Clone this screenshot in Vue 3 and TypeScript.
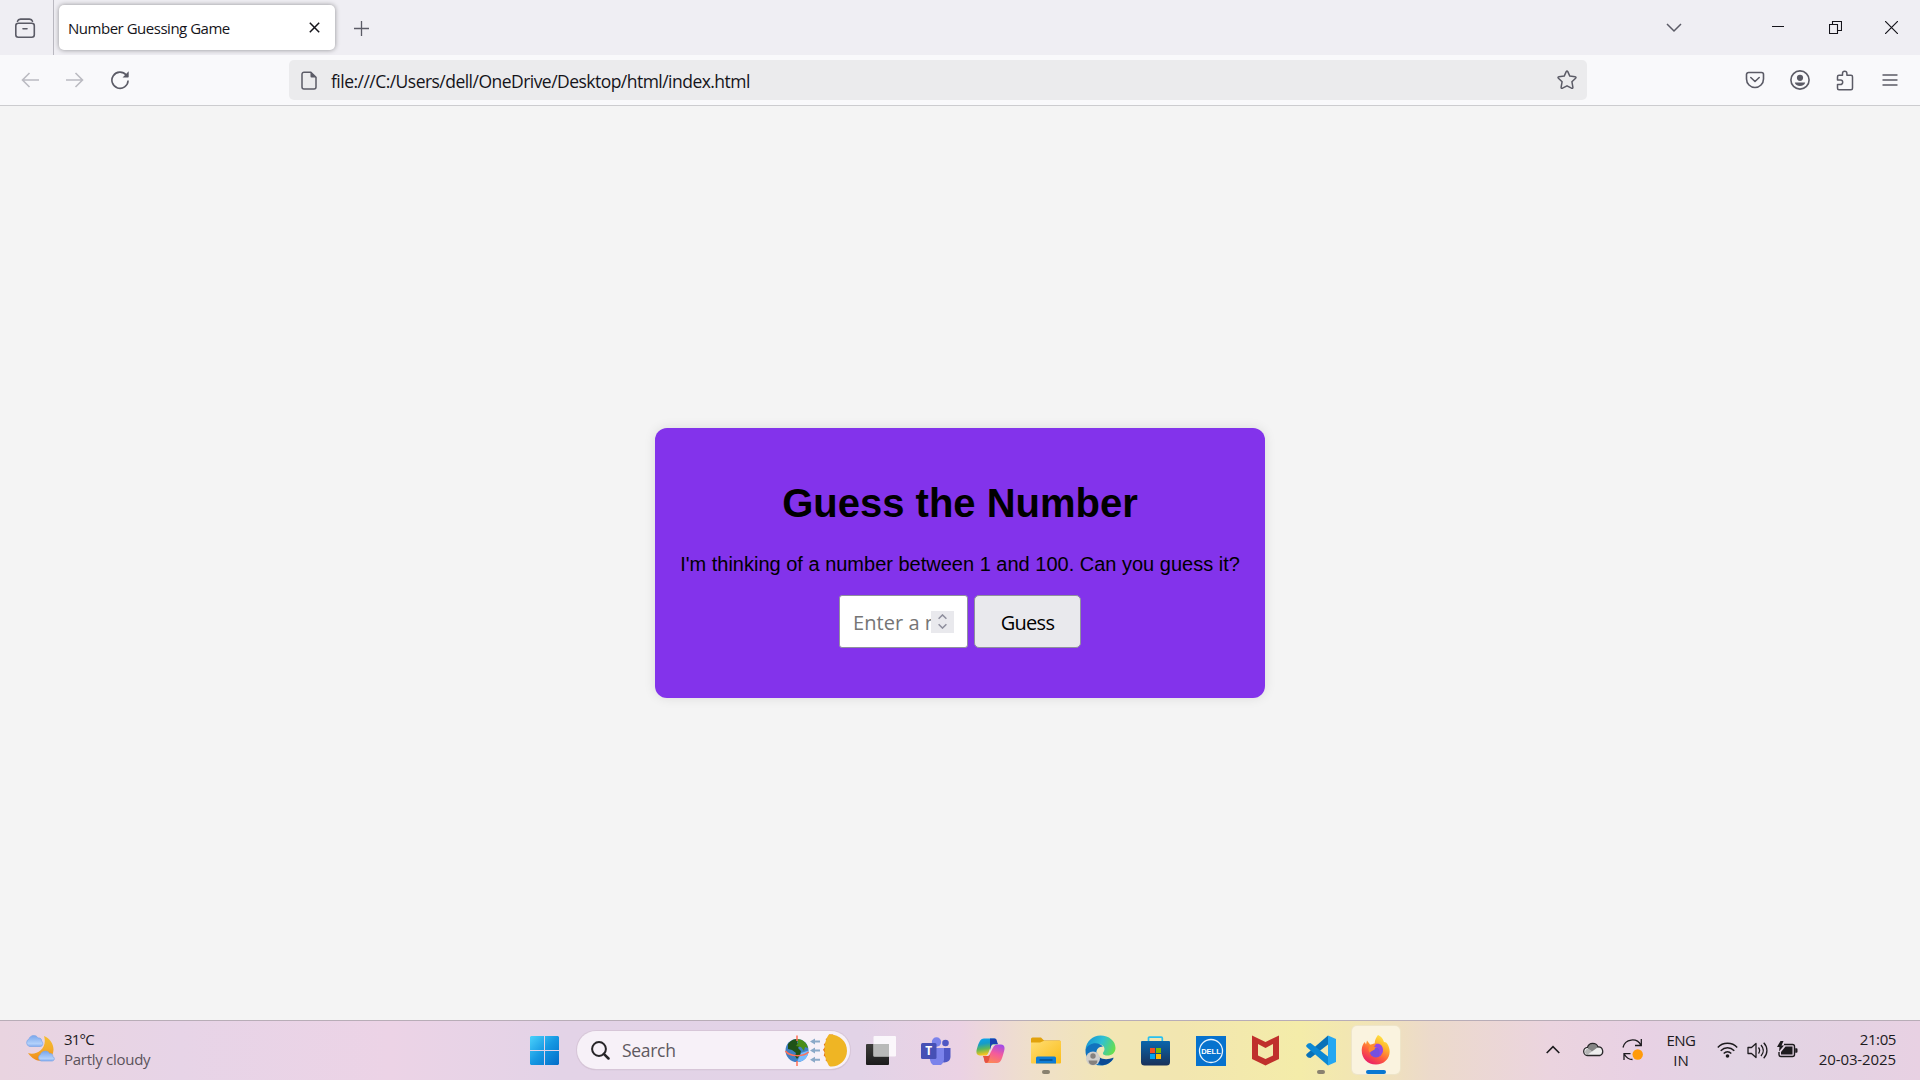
<script setup lang="ts">
import { ref } from 'vue'

const guess = ref('')
const url = 'file:///C:/Users/dell/OneDrive/Desktop/html/index.html'
</script>

<template>
  <div class="screen">
    <header class="tabbar">
      <div class="recent">
        <svg width="22" height="22" viewBox="0 0 22 22" fill="none" stroke="#5b5b66" stroke-width="1.6" stroke-linecap="round">
          <path d="M3.5 3.2C4 1.6 5 1.1 6.5 1.1h9c1.500 0 2.500.5 3 2.100" />
          <rect x="1.800" y="5.300" width="18.500" height="14" rx="2.500" />
          <path d="M9 10.800h4" />
        </svg>
      </div>
      <div class="tab">
        <span class="tab-title">Number Guessing Game</span>
        <svg width="11" height="11" viewBox="0 0 11 11" stroke="#15141a" stroke-width="1.500"><path d="M.8.8l9.400 9.400M10.200.8L.8 10.200" /></svg>
      </div>
      <svg class="plus" width="15" height="15" viewBox="0 0 15 15" stroke="#5b5b66" stroke-width="1.300"><path d="M7.500 0v15M0 7.500h15" /></svg>
      <div class="window-controls">
        <svg class="w-chev" width="16" height="10" viewBox="0 0 16 10" fill="none" stroke="#5b5b66" stroke-width="1.500"><path d="M1 1l7 7 7-7" /></svg>
        <svg class="w-min" width="12" height="14" viewBox="0 0 12 14" stroke="#15141a"><path d="M0 6.500h12" /></svg>
        <svg class="w-max" width="13" height="14" viewBox="0 0 13 14" fill="none" stroke="#15141a" stroke-width="1.100"><path d="M.5 4.500h8v9h-8zM3.500 4.500v-3h9v9h-4" /></svg>
        <svg class="w-close" width="13" height="13" viewBox="0 0 13 13" stroke="#15141a" stroke-width="1.200"><path d="M0 0l13 13M13 0L0 13" /></svg>
      </div>
    </header>

    <nav class="toolbar">
      <div class="nav-icons">
        <svg width="18" height="16" viewBox="0 0 18 16" fill="none" stroke="#bbbbc2" stroke-width="1.600"><path d="M18 8H1.500M8.500 1l-7 7 7 7" /></svg>
        <svg width="18" height="16" viewBox="0 0 18 16" fill="none" stroke="#bbbbc2" stroke-width="1.600"><path d="M0 8h16.500M9.500 1l7 7-7 7" /></svg>
        <svg width="18" height="20" viewBox="0 0 18 20" fill="none" stroke="#5b5b66" stroke-width="1.600"><path d="M15.200 5A8.100 8.100 0 1 0 17.100 10.500" /><path d="M17.700 1.200v5.500a.7.700 0 0 1-.7.700h-5.400z" fill="#5b5b66" stroke="none" /></svg>
      </div>
      <div class="urlbar">
        <svg width="16" height="19" viewBox="0 0 16 19" fill="none" stroke="#5b5b66" stroke-width="1.500"><path d="M3 1.200h6.800L15 6.300V16a2 2 0 0 1-2 2H3a2 2 0 0 1-2-2V3.200a2 2 0 0 1 2-2z" /><path d="M9.500 1v4.500a1 1 0 0 0 1 1H15z" fill="#5b5b66" stroke="none" /></svg>
        <span class="url">{{ url }}</span>
        <svg width="20" height="20" viewBox="0 0 20 20" fill="none" stroke="#5b5b66" stroke-width="1.500" stroke-linejoin="round"><path d="M9.200 1.600q.8-1.200 1.600 0l2 4.500 5.300.6q1.500.3.5 1.500l-3.700 3.500 1 5.600q0 1.500-1.400.9L10 15.800l-4.500 2.400q-1.400.6-1.400-.9l1-5.600L1.400 8.200q-1-1.200.5-1.500l5.300-.6z" /></svg>
      </div>
      <div class="tools">
        <svg width="20" height="18" viewBox="0 0 20 18" fill="none" stroke="#5b5b66" stroke-width="1.600" stroke-linecap="round" stroke-linejoin="round"><path d="M3.500 1.500h13a2 2 0 0 1 2 2V8A8.400 8.400 0 0 1 1.500 8V3.500a2 2 0 0 1 2-2z" /><path d="M5.800 6.500L10 10.500l4.200-4" /></svg>
        <svg class="account" width="20" height="20" viewBox="0 0 20 20" fill="#5b5b66"><circle cx="10" cy="10" r="9.100" fill="none" stroke="#5b5b66" stroke-width="1.600" /><circle cx="10" cy="7.800" r="3.100" /><path d="M4.800 12.500h10.400c-.4 2.100-2.500 3.600-5.200 3.600s-4.800-1.500-5.200-3.600z" /></svg>
        <svg class="puzzle" width="18" height="21" viewBox="0 0 18 21" fill="none" stroke="#5b5b66" stroke-width="1.500" stroke-linejoin="round"><path d="M1.500 8V6.700q0-1.500 1.500-1.500h3.500V3.500a2.200 2.200 0 0 1 4.400 0v1.700H15q1.500 0 1.500 1.500v11.600q0 1.500-1.500 1.500H3q-1.500 0-1.500-1.500v-3.800h3a2.200 2.200 0 0 0 0-4.400h-3z" /></svg>
        <svg width="16" height="12" viewBox="0 0 16 12" stroke="#5b5b66" stroke-width="1.400" stroke-linecap="round"><path d="M1 1h14M1 6h14M1 11h14" /></svg>
      </div>
    </nav>

    <main class="page">
      <section class="card">
        <h1>Guess the Number</h1>
        <p>I'm thinking of a number between 1 and 100. Can you guess it?</p>
        <div class="controls">
          <label class="field">
            <input v-model="guess" type="text" placeholder="Enter a number" />
            <span class="spinner">
              <svg width="9" height="15" viewBox="0 0 9 15" fill="none" stroke="#8f8f9d" stroke-width="1.500"><path d="M.6 4.700l3.900-3.800 3.900 3.800M.6 10.300l3.900 3.800 3.900-3.800" /></svg>
            </span>
          </label>
          <button type="button"><span>Guess</span></button>
        </div>
      </section>
    </main>

    <footer class="taskbar">
      <div class="weather">
        <svg width="31" height="29" viewBox="0 0 31 29">
          <defs>
            <linearGradient id="moon" x1="0" y1="0" x2="0" y2="1"><stop offset="0" stop-color="#f5bd2e" /><stop offset=".5" stop-color="#f3ad2c" /><stop offset="1" stop-color="#f18a18" /></linearGradient>
            <linearGradient id="cloud" x1="0" y1="0" x2="0" y2="1"><stop offset="0" stop-color="#79a7ed" /><stop offset=".75" stop-color="#b3d1fa" /><stop offset="1" stop-color="#82acef" /></linearGradient>
          </defs>
          <path d="M19 2C26 5 30 12 28 19 25 28 11 31 3 19c8 3 20-4 16-17z" fill="url(#moon)" />
          <path d="M4.500 12.500a4 4 0 0 1-.5-7.500C5 1 11 0 13 4c3-.5 4 2 3.500 3 2.500 2 1 5.500-1 5.500z" fill="url(#cloud)" stroke="#7ba6e8" stroke-width=".7" />
          <path d="M16 27a3.500 3.500 0 0 1-.5-6.500c1-3.500 7-5 9-1 3-.5 3.500 2 3.300 3 2.700 1.500 1.500 4.500-.8 4.500z" fill="url(#cloud)" stroke="#7ba6e8" stroke-width=".7" />
        </svg>
        <div class="weather-text"><span class="temp">31°C</span><span class="cond">Partly cloudy</span></div>
      </div>

      <svg class="start" width="29" height="29" viewBox="0 0 29 29">
        <defs><linearGradient id="win" x1="0" y1="0" x2="1" y2="1"><stop offset="0" stop-color="#4bd2fb" /><stop offset=".5" stop-color="#1597e2" /><stop offset="1" stop-color="#036cc8" /></linearGradient></defs>
        <path d="M1 0h13v14H0V1zM15 0h13l1 1v13H15zM0 15h14v14H1l-1-1zM15 15h14v13l-1 1H15z" fill="url(#win)" />
      </svg>

      <div class="search">
        <svg width="19" height="19" viewBox="0 0 19 19" fill="none" stroke="#262427" stroke-width="2"><circle cx="8" cy="8" r="6.900" /><path d="M12.800 12.800l4.700 4.700" stroke-width="2.500" stroke-linecap="round" /></svg>
        <span class="search-text">Search</span>
        <svg width="64" height="35" viewBox="0 0 64 35">
          <circle cx="13" cy="17.500" r="11.500" fill="#3f7fc4" />
          <path d="M13 29c7 0 11.500-5 11.500-11.500L17 20z" fill="#78bbff" />
          <path d="M4 11C7 7 10 6 14 6l-1 4 3 2-2 3 3 3-1 4-3 4-2-3 1-3-4-3-4-1z" fill="#1f5218" />
          <path d="M13 6c6 0 10 4 11 9l-3-1-1 4-3-4-5-1 2-3z" fill="#4a8e18" />
          <path d="M1.500 18c4 6 18 6 23 1M13 2.500V8M13 28v5" fill="none" stroke="#ff7057" stroke-width="1.500" />
          <g fill="#8ba9c8"><path d="M26 8.500L31 5.500v2h5v2h-5v2zM26 17.500l5-3v2h5v2h-5v2zM26 26.700l5-3v2h5v2h-5v2z" /></g>
          <path d="M49 1.500h-4l-.5 3-2.800 1.500.6 3-2.500 2.300 1.200 2.800-2 2.700 1.700 2.700-1 3 2.300 2.200-.3 3 2.800 1.500.4 3.300h4z" fill="#e6751c" />
          <path d="M45 1.500C55 1 63 8 63 18S54 34.500 46 33.500C39.500 27 38.500 9 45 1.500z" fill="#efb524" />
        </svg>
      </div>

      <div class="apps">
        <span class="app"><svg width="30" height="29" viewBox="0 0 30 29">
          <defs><linearGradient id="tv" x2="0" y2="1"><stop stop-color="#3c3c3a" /><stop offset="1" stop-color="#1c1c1c" /></linearGradient></defs>
          <rect y="8" width="23" height="21" rx="1" fill="url(#tv)" /><rect x="7.500" y="0" width="22.500" height="20.500" rx="1" fill="#fff" opacity=".82" /><path d="M7.500 8H23v12.500H7.500z" fill="#b9bab9" />
        </svg></span>
        <span class="app"><svg width="30" height="28" viewBox="0 0 30 28">
          <circle cx="24.500" cy="6" r="3.300" fill="#4f58c4" /><path d="M19 11h10.500v9a6 6 0 0 1-10 4z" fill="#4f58c4" />
          <circle cx="15.500" cy="5" r="4.700" fill="#7b83eb" /><path d="M8 11h15v10a7 7 0 0 1-14 2z" fill="#7b83eb" />
          <rect y="6" width="15.500" height="16" rx="1.500" fill="#4650b5" /><text x="7.700" y="18.300" text-anchor="middle" class="teams-t">T</text>
        </svg></span>
        <span class="app"><svg width="29" height="27" viewBox="0 0 29 27">
          <defs>
            <linearGradient id="cp1" x2=".2" y2="1"><stop stop-color="#0aa4f1" /><stop offset=".35" stop-color="#169cc8" /><stop offset=".65" stop-color="#5eb75a" /><stop offset="1" stop-color="#ffc51a" /></linearGradient>
            <linearGradient id="cp2" x1=".8" y1="0" x2=".4" y2="1"><stop stop-color="#a04bea" /><stop offset=".5" stop-color="#f55b9b" /><stop offset="1" stop-color="#fc8757" /></linearGradient>
          </defs>
          <path d="M8 1.500h10c3 0 2 5 4 6h-5c-3 0-4 11-7 11H4c-4 0-4-4-3-7 1.500-5 3-10 7-10z" fill="url(#cp1)" />
          <path d="M14 1.500h5c2 0 2 4 3 5.500h-5c-2 0-2 3-3 6z" fill="#1840b2" />
          <path d="M21 7.500h4c4 0 4 4 3 7-2 7-3 11.500-7 11.500H11c-3 0-2-5-4-7h5c3 0 4-11.500 9-11.500z" fill="url(#cp2)" />
          <path d="M7 19h5c2 0 2-2 3-5l-2 9c-.6 2-1.500 3-3 3-2 0-1.500-4-3-7z" fill="#e55242" />
        </svg></span>
        <span class="app running"><svg width="30" height="27" viewBox="0 0 30 27">
          <defs><linearGradient id="fold" x2="1" y2="1"><stop stop-color="#ffdd73" /><stop offset="1" stop-color="#fbbd19" /></linearGradient></defs>
          <path d="M0 2a1.500 1.500 0 0 1 1.500-1.500H10L13 3.500h15.500A1.500 1.500 0 0 1 30 5v5H0z" fill="#e2a20c" />
          <path d="M0 5.500h9l3.500-1.500H30v21.500a1 1 0 0 1-1 1H1a1 1 0 0 1-1-1z" fill="url(#fold)" />
          <path d="M5 26.500V21a1.500 1.500 0 0 1 1.500-1.500h17A1.500 1.500 0 0 1 25 21v5.500z" fill="#0e7dd5" /><path d="M8.500 23h13" stroke="#064783" stroke-width="1.300" />
        </svg></span>
        <span class="app"><svg width="31" height="31" viewBox="0 0 31 31">
          <defs><linearGradient id="ed" x1="0" y1=".3" x2="1" y2=".6"><stop stop-color="#1794d5" /><stop offset=".5" stop-color="#2fc0d3" /><stop offset="1" stop-color="#67df4c" /></linearGradient></defs>
          <path d="M.5 15C1 6 8 .5 15.500.5 24 .5 30.500 6 30.500 13c0 5-4 7.500-8 7.500-5 0-5-2.500-4-3.500 3-4-1-8-5-8-5 0-10 2-13 6z" fill="url(#ed)" />
          <path d="M.5 15c3-8 14-8.500 17.500-3-5-1-8 4-6 9 2 6 9 8 17 2-3 5-8 7.500-13 7.500C7 30.500 0 24 .5 15z" fill="#1273be" />
          <path d="M12 17c0 7 9 9 16.500 5.500-2 5-8 8-12.500 7.500-4-2-6-8-4-13z" fill="#0b4a94" />
          <circle cx="8" cy="23.500" r="7" fill="#d1cfcc" /><circle cx="8" cy="21" r="2.700" fill="#85817e" /><path d="M3.500 25.500h9c0 6-9 6-9 0z" fill="#85817e" />
        </svg></span>
        <span class="app"><svg width="29" height="30" viewBox="0 0 29 30">
          <defs><linearGradient id="store" x2="0" y2="1"><stop stop-color="#0a66ac" /><stop offset="1" stop-color="#19315a" /></linearGradient></defs>
          <path d="M7.500 6V2.200q0-1 1-1h11.800q1 0 1 1V6" fill="none" stroke="#29c0f0" stroke-width="1.700" /><path d="M1 5h27q1 0 1 1v20q0 3.500-3.500 3.500h-22Q0 29.500 0 26V6q0-1 1-1z" fill="url(#store)" />
          <path d="M9 12h5v5H9z" fill="#f25022" /><path d="M15 12h5v5h-5z" fill="#7fba00" /><path d="M9 18h5v5H9z" fill="#00a4ef" /><path d="M15 18h5v5h-5z" fill="#ffb900" />
        </svg></span>
        <span class="app"><svg width="30" height="30" viewBox="0 0 30 30"><path d="M0 0h30v30H0z" fill="#0672ce" /><circle cx="15" cy="15" r="11.500" fill="none" stroke="#e8f3fc" stroke-width="1.300" /><text x="15" y="17.800" text-anchor="middle" class="dell">DELL</text></svg></span>
        <span class="app"><svg width="27" height="31" viewBox="0 0 27 31"><path d="M0 .5l13.500 6.500L27 .5v23.500L13.500 30.500 0 24zM6 9v11.500l7.500 3.500 7.500-3.500V9l-7.500 4z" fill="#c0302c" fill-rule="evenodd" /></svg></span>
        <span class="app running"><svg width="30" height="31" viewBox="0 0 30 31">
          <path d="M22 .5L30 4v23l-8 3.500z" fill="#24a7f2" /><path d="M22 .5v9L4.500 23 2 22.500.3 20.800v-1.600z" fill="#0871b8" /><path d="M22 30.500v-9L4.500 8 2 8.500.3 10.200v1.600z" fill="#0b88d4" />
        </svg></span>
        <span class="app active"><svg width="30" height="30" viewBox="0 0 30 30">
          <defs><linearGradient id="ff" x1=".85" y1="0" x2=".3" y2="1"><stop stop-color="#fff44a" /><stop offset=".35" stop-color="#ffb32b" /><stop offset=".65" stop-color="#ff613c" /><stop offset="1" stop-color="#e91c69" /></linearGradient></defs>
          <path d="M17 0c4 2 5 4 6 7 2 0 3 1 4 3 5 10-2 19.500-12 19.500C6 29.500 0 23 .8 14c.2-3 1.200-5 3-7L5 9.500l1-4 3 4 5 .5c-1-4 1-7 3-10z" fill="url(#ff)" />
          <circle cx="15" cy="15.800" r="6.600" fill="#7650df" /><path d="M9 10.500c4-3 6-2 8-1.500l1 2.500-4 1.500c0 3-4 2-5 5-2-2-2-5 0-7.500z" fill="#ff8a31" /><path d="M15 9c4-1 7 2 7 6 0 3-2 5-4 6 2-5 0-9-5-9z" fill="#9448e5" />
        </svg></span>
      </div>

      <div class="tray">
        <svg class="t-up" width="14" height="9" viewBox="0 0 14 9" fill="none" stroke="#1d1b1e" stroke-width="1.600"><path d="M.7 8L7 1.700 13.300 8" /></svg>
        <svg class="t-cloud" width="21" height="15" viewBox="0 0 21 15"><path d="M5 13.500A4 4 0 0 1 4.500 5.400C6 .2 13 0 15 5c5-.5 6.500 6.500 2 8.500z" fill="#eee" /><path d="M4.500 5.500C7 0 13 1 14.500 5.500L9 9.500 5 7z" fill="#848484" /><path d="M2 11c0-5 4-5 7-1.500l-5 3.500z" fill="#b5b5b5" /><path d="M5 13.500A4 4 0 0 1 4.500 5.400C6 .2 13 0 15 5c5-.5 6.500 6.500 2 8.500z" fill="none" stroke="#29272a" stroke-width="1.300" /></svg>
        <svg class="t-sync" width="22" height="22" viewBox="0 0 22 22" fill="none" stroke="#1d1b1e" stroke-width="1.300"><path d="M1 8.500C3-.5 15-1.500 18.800 6M19.300 0v6.500H13M2 21v-6.300h6.500M2.500 15.500c2 3.500 4.500 5 8 5" /><circle cx="15.700" cy="15.500" r="5.200" fill="#ff9b0b" stroke="none" /></svg>
        <div class="lang"><span>ENG</span><span>IN</span></div>
        <svg class="t-wifi" width="21" height="16" viewBox="0 0 21 16" fill="none" stroke="#1d1b1e" stroke-width="1.400"><path d="M.8 5.500c5-5.600 14.400-5.600 19.400 0M3.700 8.700c4-4 9.600-4 13.600 0M6.700 11.500c2.300-2.300 5.300-2.300 7.600 0" /><circle cx="10.500" cy="14" r="1.800" fill="#1d1b1e" stroke="none" /></svg>
        <svg class="t-vol" width="21" height="17" viewBox="0 0 21 17" fill="none" stroke="#1d1b1e" stroke-width="1.300" stroke-linejoin="round"><path d="M1 5.500h3.500L9 1.500v14l-4.500-4H1zM11.500 5.500c1.500 2 1.500 4 0 6M14 3c3 3.500 3 7.500 0 11M16.700.8c4.300 4.500 4.300 11 0 15.500" /></svg>
        <svg class="t-bat" width="21" height="17" viewBox="0 0 21 17"><path d="M7 3.500h8.500a2 2 0 0 1 2 2v8a2 2 0 0 1-2 2H4a2 2 0 0 1-2-2V11" fill="none" stroke="#1d1b1e" stroke-width="1.400" /><path d="M8.500 5.500h7v8H4V11zM18.200 7.300h1.300q1 0 1 1v2.400q0 1-1 1h-1.300zM3.500 0L0 6h2.500L2 10.500 7 4.500H4.500L6.500 0z" fill="#1d1b1e" /></svg>
        <div class="clock"><span class="time">21:05</span><span class="date">20-03-2025</span></div>
      </div>
    </footer>
  </div>
</template>

<style>
body { margin: 0; overflow: hidden; }
</style>

<style scoped>
* { box-sizing: border-box; }
svg { display: block; flex: none; }
.screen {
  width: 1920px; height: 1080px; display: flex; flex-direction: column;
  background: #f4f4f4; color: #15141a; font-family: "Open Sans", "Noto Sans", sans-serif; white-space: nowrap;
}
.tabbar { height: 55px; flex: none; display: flex; background: #efeef3; }
.recent { width: 54px; border-right: 1px solid #b9b8c0; padding: 18px 0 0 14px; }
.tab {
  width: 276px; height: 45px; margin: 5px 0 0 5px; padding: 0 15px 0 9px; border-radius: 5px; background: #fff;
  box-shadow: 0 0 5px rgba(0, 0, 0, .4); display: flex; align-items: center; justify-content: space-between;
}
.tab-title { font-size: 15px; letter-spacing: -.48px; padding-top: 1px; }
.plus { margin: 21px 0 0 19px; }
.window-controls { margin-left: auto; display: flex; padding-right: 22px; }
.w-chev { margin: 23px 90px 0 0; }
.w-min { margin: 20px 45px 0 0; }
.w-max { margin: 20px 43px 0 0; }
.w-close { margin-top: 21px; }

.toolbar { height: 51px; flex: none; display: flex; padding-top: 5px; background: #f9f9fb; border-bottom: 1px solid #cccccf; }
.nav-icons { width: 289px; height: 40px; display: flex; align-items: center; gap: 27px; padding-left: 21px; }
.urlbar { width: 1298px; height: 40px; border-radius: 5px; background: #ebebed; display: flex; align-items: center; padding: 0 10px 0 12px; }
.url { flex: 1; margin-left: 14px; padding-top: 2px; font-size: 17.5px; letter-spacing: -.53px; }
.tools { flex: 1; height: 40px; display: flex; align-items: center; justify-content: space-between; padding: 0 22px 0 158px; }
.account { margin-left: -2px; }
.puzzle { margin-left: -1px; margin-right: 1px; }

.page { flex: 1; display: flex; align-items: center; justify-content: center; background: #f4f4f4; }
.card {
  width: 610px; height: 270px; padding: 52px 0 0; border-radius: 12px; background: #8333eb; color: #000;
  box-shadow: 0 0 12px rgba(0, 0, 0, .1); font-family: "Liberation Sans", Arial, sans-serif;
  display: flex; flex-direction: column; align-items: center;
}
h1 { margin: 0 0 27px; font-size: 40px; line-height: 46px; }
p { margin: 0 0 19px; font-size: 20px; line-height: 23px; }
.controls { display: flex; gap: 6px; }
.field { width: 129px; height: 53px; display: flex; align-items: center; padding: 0 13px; background: #fff; border: 1px solid #8f8f9d; border-radius: 3px; }
input { width: 78px; padding: 2px 0 0; border: 0; outline: 0; background: none; color: #000; font: 20px "Open Sans", sans-serif; letter-spacing: .05px; }
input::placeholder { color: #757575; opacity: 1; }
.spinner { width: 23px; height: 22px; flex: none; display: flex; align-items: center; justify-content: center; background: #e9e9ed; }
button { width: 107px; height: 53px; padding: 2px 0 0; border: 1px solid #8f8f9d; border-radius: 5px; background: #e9e9ed; color: #000; font: 20px "Open Sans", sans-serif; letter-spacing: -.7px; }

.taskbar {
  height: 60px; flex: none; display: flex; border-top: 1px solid #b8adb7; color: #1d1b1e;
  background: linear-gradient(90deg, #e9d4e0 0, #e7d4e7 180px, #ecd3e6 390px, #e3d3e7 560px, #e2d3e7 860px, #ebd2e4 960px, #efdfcb 1030px, #f2e6b4 1110px, #f2e6b0 1180px, #f4eca9 1300px, #f1e4b6 1370px, #ecdacb 1430px, #ebd4df 1550px, #e8d1e4 1640px, #e2d5e4 1740px, #e5d2e3 1850px, #e8d1e3 1920px);
}
.weather { width: 530px; display: flex; padding: 13px 0 0 25px; }
.weather-text { display: flex; flex-direction: column; margin: -5px 0 0 8px; font-size: 15px; line-height: 20px; }
.temp { letter-spacing: -.8px; }
.cond { color: #5b535b; letter-spacing: -.28px; }
.start { margin-top: 15px; }
.search { width: 273px; height: 38px; margin: 10px 0 0 18px; border-radius: 19px; background: #f7f1f8; box-shadow: 0 0 0 1px #d7c6d8, 0 1px 1px #b9a9ba; display: flex; align-items: center; padding: 0 2px 0 14px; }
.search-text { flex: 1; margin-left: 12px; font-size: 17.5px; color: #5e595f; letter-spacing: -.3px; }
.apps { display: flex; margin-left: 3px; }
.app { width: 55px; height: 59px; display: flex; align-items: center; justify-content: center; position: relative; }
.running::after { content: ""; position: absolute; left: 24px; top: 49px; width: 8px; height: 4px; border-radius: 2px; background: #89816f; }
.active { width: 48px; height: 48px; margin: 5px 0 0 4px; border-radius: 5px; background: #faf3df; box-shadow: 0 0 0 1px #eee5c9; }
.active::after { content: ""; position: absolute; left: 14px; top: 44px; width: 20px; height: 4px; border-radius: 2px; background: #0877d2; }
.teams-t { font: bold 12px "Open Sans", sans-serif; fill: #fff; }
.dell { font: bold 7.500px "Liberation Sans", sans-serif; fill: #fff; }
.tray { flex: 1; display: flex; padding-right: 24px; justify-content: flex-end; }
.t-up { margin: 24px 23px 0 0; }
.t-cloud { margin: 21px 18px 0 0; }
.t-sync { margin: 18px 21px 0 0; }
.lang { width: 32px; display: flex; flex-direction: column; align-items: center; padding-top: 9px; font-size: 15px; line-height: 20px; }
.lang span:first-child { letter-spacing: -.5px; }
.t-wifi { margin: 21px 0 0 20px; }
.t-vol { margin: 21px 0 0 9px; }
.t-bat { margin: 20px 0 0 9px; }
.clock { width: 98px; display: flex; flex-direction: column; align-items: flex-end; padding-top: 8px; font-size: 15px; line-height: 20px; letter-spacing: -.1px; }
.time { letter-spacing: -.4px; }
</style>
